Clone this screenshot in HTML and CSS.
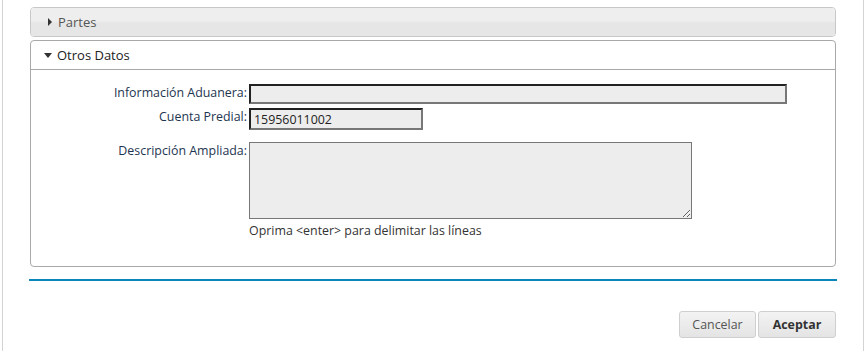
FILE: index.html
```html
<!DOCTYPE html>
<html lang="es">
<head>
<meta charset="UTF-8" />
<title>Otros Datos</title>
<link rel="stylesheet" href="styles.css">
</head>
<body>
  <div class="page">
    <div class="panel collapsed">
      <div class="panel-header">
        <svg class="arrow" width="6" height="8" viewBox="0 0 6 8"><path d="M1 0 L5 4 L1 8 Z" fill="#333"/></svg>
        <span>Partes</span>
      </div>
    </div>

    <div class="panel open">
      <div class="panel-header">
        <svg class="arrow" width="8" height="5" viewBox="0 0 8 5"><path d="M0 0 L8 0 L4 5 Z" fill="#333"/></svg>
        <span>Otros Datos</span>
      </div>
      <div class="panel-body">
        <div class="form-row">
          <label for="aduana">Información Aduanera:</label>
          <input type="text" id="aduana" class="field wide" />
        </div>
        <div class="form-row">
          <label for="predial">Cuenta Predial:</label>
          <input type="text" id="predial" class="field short" value="15956011002" />
        </div>
        <div class="form-row area-row">
          <label for="descripcion">Descripción Ampliada:</label>
          <div>
            <textarea id="descripcion" class="area"></textarea>
            <div class="hint">Oprima &lt;enter&gt; para delimitar las líneas</div>
          </div>
        </div>
      </div>
    </div>

    <div class="divider"></div>

    <div class="actions">
      <button type="button" class="btn">Cancelar</button>
      <button type="button" class="btn primary">Aceptar</button>
    </div>
  </div>
</body>
</html>
```

FILE: styles.css
```css
body {
  margin: 0;
  font-family: "Open Sans", Arial, sans-serif;
  font-size: 12.4px;
  color: #222;
  background: #fff;
}
.page {
  margin: 0 3px 0 2px;
  border-left: 1px solid #d4d4d4;
  border-right: 1px solid #d4d4d4;
  padding: 7px 27px 12px 27px;
  min-height: 332px;
}
.panel {
  border: 1px solid #c8c8c8;
  border-radius: 4px;
  margin-bottom: 3px;
}
.panel-header {
  height: 28px;
  display: flex;
  align-items: center;
  padding-left: 16px;
  font-size: 13px;
}
.collapsed .panel-header {
  background: linear-gradient(#eeeeee 0%, #eeeeee 45%, #e6e6e6 55%, #e6e6e6 100%);
  color: #555;
  border-radius: 3px;
}
.collapsed .arrow {
  margin-right: 5px;
}
.open {
  border-color: #a9a9a9;
}
.open .panel-header {
  border-bottom: 1px solid #a9a9a9;
  color: #222;
  padding-left: 13px;
}
.open .arrow {
  margin-right: 5px;
}
.panel-body {
  padding: 14px 0 23px 0;
}
.form-row {
  display: flex;
  align-items: flex-start;
  margin-bottom: 4px;
}
.form-row label {
  width: 216px;
  text-align: right;
  padding-right: 2px;
  color: #1e3550;
  line-height: 17px;
}
.field {
  box-sizing: border-box;
  height: 20px;
  margin: 0;
  padding: 1px 3px;
  font-family: "Open Sans", Arial, sans-serif;
  font-size: 12.4px;
  color: #222;
  background: #ededed;
  border: 2px solid;
  border-color: #222 #777 #777 #222;
}
.wide { width: 538px; }
.short { width: 174px; height: 22px; }
.area-row {
  margin-top: 12px;
}
.area {
  display: block;
  box-sizing: border-box;
  width: 443px;
  height: 77px;
  margin: 0;
  background: #ededed;
  border: 1px solid #777;
}
.hint {
  margin-top: 3px;
  color: #333;
}
.divider {
  height: 2px;
  background: #0a86ba;
  margin: 12px -1px 0 -1px;
}
.actions {
  display: flex;
  justify-content: flex-end;
  gap: 2px;
  margin-top: 30px;
}
.btn {
  height: 27px;
  width: 77px;
  padding: 0;
  font-family: "Open Sans", Arial, sans-serif;
  font-size: 12.4px;
  color: #555;
  background: linear-gradient(#f3f3f3, #e4e4e4);
  border: 1px solid #cfcfcf;
  border-radius: 3px;
}
.btn.primary {
  font-weight: bold;
  color: #333;
  width: 78px;
}
```
